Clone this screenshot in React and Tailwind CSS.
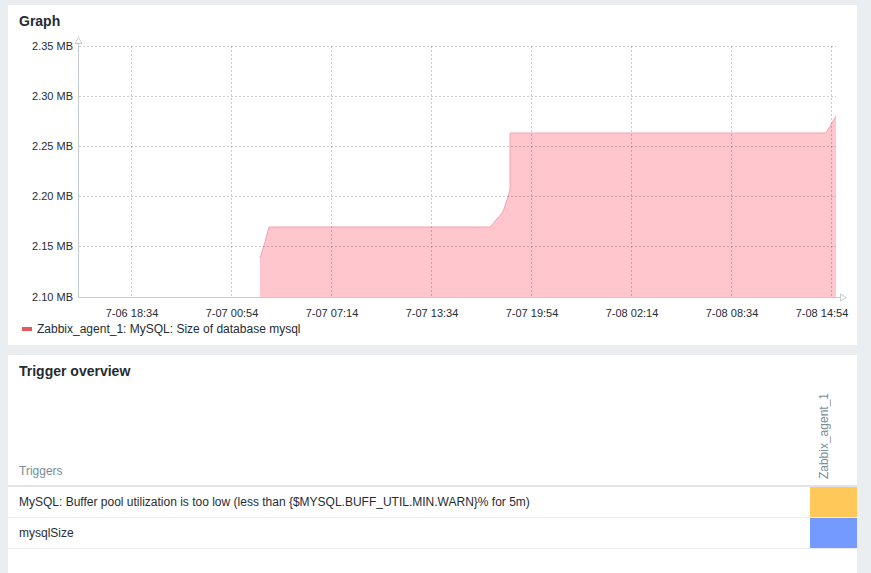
import React from "react";

const FONT = { fontFamily: '"Liberation Sans", Arial, sans-serif' };

function Chart() {
  const yTicks = [
    { y: 46, l: "2.35 MB" },
    { y: 96, l: "2.30 MB" },
    { y: 146, l: "2.25 MB" },
    { y: 196, l: "2.20 MB" },
    { y: 246, l: "2.15 MB" },
    { y: 297, l: "2.10 MB" },
  ];
  const xTicks = [
    { x: 131, l: "7-06 18:34" },
    { x: 231, l: "7-07 00:54" },
    { x: 331, l: "7-07 07:14" },
    { x: 431, l: "7-07 13:34" },
    { x: 531, l: "7-07 19:54" },
    { x: 631, l: "7-08 02:14" },
    { x: 731, l: "7-08 08:34" },
    { x: 831, l: "7-08 14:54", lx: 822 },
  ];
  const line =
    "260,258 265,242 269,227 490,227 503,212 507,200 510,190 510,133 826,133 836,116";
  const area = `260,297 ${line} 836,297`;
  return (
    <svg
      width="849"
      height="285"
      viewBox="8 35 849 285"
      className="block"
      style={FONT}
    >
      <polygon points={area} fill="#ffc6cd" />
      <polyline points={line} fill="none" stroke="#f3a3ad" strokeWidth="1" />
      {yTicks.slice(0, 5).map((t) => (
        <line
          key={t.y}
          x1="79"
          x2="836"
          y1={t.y + 0.5}
          y2={t.y + 0.5}
          stroke="rgba(0,0,0,0.2)"
          strokeDasharray="2 2"
        />
      ))}
      {xTicks.map((t) => (
        <line
          key={t.x}
          x1={t.x + 0.5}
          x2={t.x + 0.5}
          y1="46"
          y2="297"
          stroke="rgba(0,0,0,0.2)"
          strokeDasharray="2 2"
        />
      ))}
      <line x1="78.5" x2="78.5" y1="42" y2="297.5" stroke="#c5ccd1" />
      <line x1="78" x2="840" y1="297.5" y2="297.5" stroke="#c5ccd1" />
      <polygon points="78.5,37.5 75,43.5 82,43.5" fill="#fff" stroke="#c5ccd1" />
      <polygon points="846.5,297.5 840.5,294 840.5,301" fill="#fff" stroke="#c5ccd1" />
      {yTicks.map((t) => (
        <text
          key={t.l}
          x="73"
          y={t.y + 4}
          textAnchor="end"
          fontSize="11"
          fill="#1f2c33"
        >
          {t.l}
        </text>
      ))}
      {xTicks.map((t) => (
        <text
          key={t.l}
          x={t.lx ?? t.x + 1}
          y="317"
          textAnchor="middle"
          fontSize="11"
          fill="#1f2c33"
        >
          {t.l}
        </text>
      ))}
    </svg>
  );
}

export default function App() {
  return (
    <div
      className="min-h-[573px] w-[871px] bg-[#ebeef0] pl-[8px] pt-[5px] overflow-hidden"
      style={FONT}
    >
      {/* Graph panel */}
      <div className="w-[849px] h-[340px] bg-white flex flex-col">
        <div className="h-[30px] pl-[11px] pt-[8px] text-[14px] leading-[16px] font-bold text-[#1f2c33]">
          Graph
        </div>
        <div>
          <Chart />
        </div>
        <div className="h-[18px] flex items-center pl-[14px] text-[12px] text-[#1f2c33]">
          <span className="inline-block w-[10px] h-[4px] bg-[#e45959] mr-[5px]" />
          <span>Zabbix_agent_1: MySQL: Size of database mysql</span>
        </div>
      </div>

      {/* Trigger overview panel */}
      <div className="mt-[10px] w-[849px] h-[230px] bg-white">
        <div className="h-[32px] pl-[11px] pt-[8px] text-[14px] leading-[16px] font-bold text-[#1f2c33]">
          Trigger overview
        </div>
        <div className="flex items-end h-[98px] border-b-2 border-[#e0e4e7] box-content">
          <div className="flex-1 pl-[11px] pb-[7px] text-[12px] leading-[14px] text-[#768d99]">
            Triggers
          </div>
          <div className="w-[47px] pl-[8px] pb-[6px] flex">
            <span className="[writing-mode:vertical-rl] rotate-180 text-[12px] leading-[12px] text-[#768d99]">
              Zabbix_agent_1
            </span>
          </div>
        </div>
        <div className="flex h-[30px] border-b border-[#ebeef0] box-content">
          <div className="flex-1 pl-[11px] flex items-center text-[12px] text-[#1f2c33]">
            MySQL: Buffer pool utilization is too low (less than {"{$MYSQL.BUFF_UTIL.MIN.WARN}"}% for 5m)
          </div>
          <div className="w-[47px] bg-[#ffc859]" />
        </div>
        <div className="flex h-[30px] border-b border-[#ebeef0] box-content">
          <div className="flex-1 pl-[11px] flex items-center text-[12px] text-[#1f2c33]">
            mysqlSize
          </div>
          <div className="w-[47px] bg-[#7499ff]" />
        </div>
      </div>
    </div>
  );
}
